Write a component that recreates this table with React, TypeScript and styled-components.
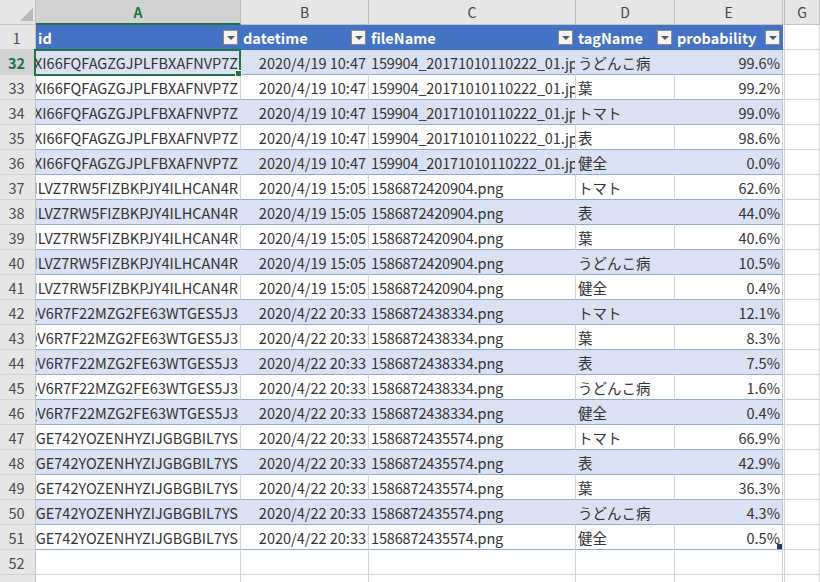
import React from "react";
import styled, { createGlobalStyle, css } from "styled-components";

const GlobalStyle = createGlobalStyle`
  html, body { margin: 0; padding: 0; background: #ffffff; }
  body { font-family: "Noto Sans CJK JP", "Noto Sans", sans-serif; }
  * { box-sizing: border-box; }
`;

const COLS = "36px 205px 128px 207px 99px 108px 2px 1fr";
const GRID = "#d4d4d4";
const HEAD_LINE = "#c2c2c2";
const BAND = "#d9e1f2";
const BLUE = "#4472c4";
const ROWLINE = "#8ea9db";
const GREEN = "#217346";
const HEAD_BG = "#e6e6e6";
const HEAD_SEL = "#d2d2d2";

const Sheet = styled.div`
  width: 820px;
  height: 582px;
  overflow: hidden;
  background: #ffffff;
`;

const Row = styled.div`
  display: grid;
  grid-template-columns: ${COLS};
  height: 25px;
`;

const Corner = styled.div`
  position: relative;
  background: ${HEAD_BG};
  border-right: 1px solid ${HEAD_LINE};
  border-bottom: 1px solid ${HEAD_LINE};
  &::after {
    content: "";
    position: absolute;
    right: 2px;
    bottom: 3px;
    width: 0;
    height: 0;
    border-left: 13px solid transparent;
    border-bottom: 13px solid #b9b9b9;
  }
`;

const ColHead = styled.div<{ $sel?: boolean }>`
  display: flex;
  justify-content: center;
  align-items: flex-end;
  padding-bottom: 2px;
  font-size: 14px;
  color: #444444;
  background: ${HEAD_BG};
  border-right: 1px solid ${HEAD_LINE};
  border-bottom: 1px solid ${HEAD_LINE};
  ${(p) =>
    p.$sel &&
    css`
      background: ${HEAD_SEL};
      color: ${GREEN};
      font-weight: 700;
      border-bottom: 2px solid ${GREEN};
      padding-bottom: 1px;
    `}
`;

const HiddenHead = styled.div`
  background: ${HEAD_BG};
  border-right: 1px solid ${HEAD_LINE};
  border-bottom: 1px solid ${HEAD_LINE};
`;

const RowHead = styled.div<{ $sel?: boolean }>`
  display: flex;
  justify-content: center;
  align-items: flex-end;
  padding-bottom: 1px;
  padding-right: 2px;
  font-size: 14.5px;
  color: #4a4a4a;
  background: ${HEAD_BG};
  border-right: 1px solid ${HEAD_LINE};
  border-bottom: 1px solid ${GRID};
  ${(p) =>
    p.$sel &&
    css`
      background: ${HEAD_SEL};
      color: ${GREEN};
      font-weight: 700;
    `}
`;

const TableHead = styled.div`
  display: flex;
  align-items: center;
  padding: 0 3px 0 2px;
  background: ${BLUE};
  color: #ffffff;
  font-weight: 700;
  font-size: 14.5px;
  white-space: nowrap;
  overflow: hidden;
`;

const FilterButton = styled.span`
  position: relative;
  flex: 0 0 auto;
  margin-left: auto;
  width: 15px;
  height: 15px;
  background: #f4f4f4;
  border: 1px solid #8c8c8c;
  &::after {
    content: "";
    position: absolute;
    left: 3px;
    top: 5px;
    width: 0;
    height: 0;
    border-left: 4px solid transparent;
    border-right: 4px solid transparent;
    border-top: 4px solid #595959;
  }
`;

const Cell = styled.div<{ $band?: boolean; $right?: boolean; $plain?: boolean }>`
  position: relative;
  display: flex;
  align-items: center;
  justify-content: ${(p) => (p.$right ? "flex-end" : "flex-start")};
  padding: ${(p) => (p.$right ? "0 2px 0 0" : "0 0 0 2px")};
  font-size: 14.5px;
  color: #333333;
  white-space: nowrap;
  overflow: hidden;
  background: ${(p) => (p.$band ? BAND : "#ffffff")};
  border-right: 1px solid ${(p) => (p.$band ? BAND : GRID)};
  border-bottom: 1px solid ${(p) => (p.$plain ? GRID : ROWLINE)};
`;

const NameCell = styled(Cell)`
  letter-spacing: -0.15px;
`;

const EdgeCell = styled(Cell)`
  overflow: visible;
  border-right-color: ${(p) => (p.$band ? "#b4c3e2" : GRID)};
`;

const SelectedCell = styled(Cell)`
  overflow: visible;
  z-index: 2;
`;

const Clip = styled.span`
  display: flex;
  justify-content: flex-end;
  width: 100%;
  overflow: hidden;
`;

const SelectionFrame = styled.span`
  position: absolute;
  left: -2px;
  top: -1px;
  right: -1px;
  bottom: -2px;
  border: 2px solid ${GREEN};
  pointer-events: none;
`;

const FillHandle = styled.span`
  position: absolute;
  right: -3px;
  bottom: -3px;
  width: 7px;
  height: 7px;
  background: ${GREEN};
  border: 1px solid #ffffff;
`;

const ResizeHandle = styled.span`
  position: absolute;
  right: 0;
  bottom: 0;
  width: 5px;
  height: 5px;
  background: #1f3864;
`;

const Gap = styled.div`
  background: #ffffff;
  border-right: 1px solid ${GRID};
  border-bottom: 1px solid ${GRID};
`;

type Group = { id: string; dt: string; file: string; tags: [string, string][] };

const groups: Group[] = [
  {
    id: "KXI66FQFAGZGJPLFBXAFNVP7Z",
    dt: "2020/4/19 10:47",
    file: "159904_20171010110222_01.jpg",
    tags: [
      ["うどんこ病", "99.6%"],
      ["葉", "99.2%"],
      ["トマト", "99.0%"],
      ["表", "98.6%"],
      ["健全", "0.0%"],
    ],
  },
  {
    id: "ILVZ7RW5FIZBKPJY4ILHCAN4R",
    dt: "2020/4/19 15:05",
    file: "1586872420904.png",
    tags: [
      ["トマト", "62.6%"],
      ["表", "44.0%"],
      ["葉", "40.6%"],
      ["うどんこ病", "10.5%"],
      ["健全", "0.4%"],
    ],
  },
  {
    id: "QV6R7F22MZG2FE63WTGES5J3",
    dt: "2020/4/22 20:33",
    file: "1586872438334.png",
    tags: [
      ["トマト", "12.1%"],
      ["葉", "8.3%"],
      ["表", "7.5%"],
      ["うどんこ病", "1.6%"],
      ["健全", "0.4%"],
    ],
  },
  {
    id: "KGE742YOZENHYZIJGBGBIL7YS",
    dt: "2020/4/22 20:33",
    file: "1586872435574.png",
    tags: [
      ["トマト", "66.9%"],
      ["表", "42.9%"],
      ["葉", "36.3%"],
      ["うどんこ病", "4.3%"],
      ["健全", "0.5%"],
    ],
  },
];

type DataRow = { id: string; dt: string; file: string; tag: string; prob: string };
const rows: DataRow[] = groups.flatMap((g) =>
  g.tags.map(([tag, prob]) => ({ id: g.id, dt: g.dt, file: g.file, tag, prob }))
);

const headers = ["id", "datetime", "fileName", "tagName", "probability"];
const letters = ["A", "B", "C", "D", "E"];

export default function App() {
  return (
    <>
      <GlobalStyle />
      <Sheet>
        <Row>
          <Corner />
          {letters.map((l) => (
            <ColHead key={l} $sel={l === "A"}>
              {l}
            </ColHead>
          ))}
          <HiddenHead />
          <ColHead>G</ColHead>
        </Row>
        <Row>
          <RowHead>1</RowHead>
          {headers.map((h) => (
            <TableHead key={h}>
              {h}
              <FilterButton />
            </TableHead>
          ))}
          <Gap />
          <Gap />
        </Row>
        {rows.map((r, i) => {
          const n = 32 + i;
          const band = i % 2 === 0;
          const last = i === rows.length - 1;
          const IdCell = i === 0 ? SelectedCell : Cell;
          return (
            <Row key={n}>
              <RowHead $sel={i === 0}>{n}</RowHead>
              <IdCell $band={band} $right>
                <Clip>{r.id}</Clip>
                {i === 0 && (
                  <SelectionFrame>
                    <FillHandle />
                  </SelectionFrame>
                )}
              </IdCell>
              <Cell $band={band} $right>
                {r.dt}
              </Cell>
              <NameCell $band={band}>{r.file}</NameCell>
              <Cell $band={band}>{r.tag}</Cell>
              <EdgeCell $band={band} $right>
                {r.prob}
                {last && <ResizeHandle />}
              </EdgeCell>
              <Gap />
              <Gap />
            </Row>
          );
        })}
        {[52, 53].map((n) => (
          <Row key={n}>
            <RowHead>{n}</RowHead>
            <Cell $plain />
            <Cell $plain />
            <Cell $plain />
            <Cell $plain />
            <Cell $plain />
            <Gap />
            <Gap />
          </Row>
        ))}
      </Sheet>
    </>
  );
}
